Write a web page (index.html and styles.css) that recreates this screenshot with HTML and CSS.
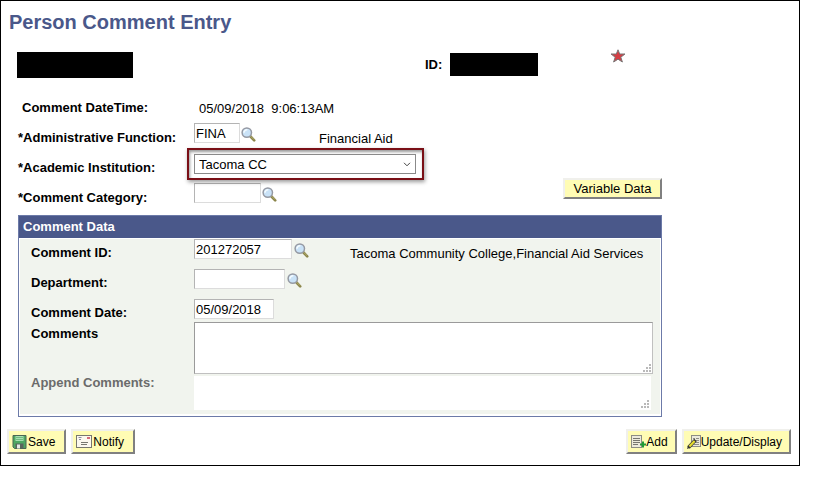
FILE: index.html
```
<!DOCTYPE html>
<html lang="en">
<head>
    <meta charset="UTF-8">
    <title>Person Comment Entry</title>
    <link rel="stylesheet" href="styles.css">
</head>
<body>
    <!-- Shared icons -->
    <svg class="sprite" width="0" height="0">
        <symbol id="icon-lookup" viewBox="0 0 15 15">
            <path d="M9.5 9.5 L13.2 13.4" stroke="#8a8449" stroke-width="2.6" stroke-linecap="round"/>
            <path d="M9.6 9.2 L13 12.6" stroke="#c3bd7c" stroke-width="0.8"/>
            <circle cx="5.8" cy="5.6" r="4.7" fill="#c9e2f7" stroke="#9599a3" stroke-width="1.5"/>
            <path d="M3 5.8 A3 3 0 0 1 6.4 2.8" fill="none" stroke="#f4fbff" stroke-width="1.6"/>
        </symbol>
        <symbol id="icon-grip" viewBox="0 0 8 8">
            <path d="M6 0h2v2h-2z M3 3h2v2h-2z M6 3h2v2h-2z M0 6h2v2h-2z M3 6h2v2h-2z M6 6h2v2h-2z" fill="#b9b9b9"/>
        </symbol>
    </svg>

    <form class="page" onsubmit="return false">
        <h1>Person Comment Entry</h1>

        <div class="person">
            <span class="redacted redacted-name"></span>
            <span class="person-id">ID:</span>
            <span class="redacted redacted-id"></span>
            <svg class="star" width="16" height="14" viewBox="0 0 16 14">
                <path d="M8 0.8 L9.7 5 L15 5 L10.8 8.2 L12.4 13 L8 10.2 L3.6 13 L5.2 8.2 L1 5 L6.3 5 Z" fill="#d43f45" stroke="#777" stroke-width="1"/>
            </svg>
        </div>

        <div class="fields">
            <div class="row">
                <span class="label">Comment DateTime:</span>
                <span class="value datetime">05/09/2018&nbsp; 9:06:13AM</span>
            </div>
            <div class="row">
                <label class="label required" for="function">*Administrative Function:</label>
                <input type="text" id="function" class="w-code" value="FINA">
                <button type="button" class="lookup" aria-label="Look up Administrative Function"><svg width="15" height="15"><use href="#icon-lookup"/></svg></button>
                <span class="value function-name">Financial Aid</span>
            </div>
            <div class="row">
                <label class="label required" for="institution">*Academic Institution:</label>
                <div class="highlight">
                    <select id="institution">
                        <option>Tacoma CC</option>
                    </select>
                    <svg class="chevron" width="8" height="5" viewBox="0 0 8 5"><path d="M1 0.8 L4 3.8 L7 0.8" fill="none" stroke="#444" stroke-width="1"/></svg>
                </div>
            </div>
            <div class="row">
                <label class="label required" for="category">*Comment Category:</label>
                <input type="text" id="category" class="w-category">
                <button type="button" class="lookup" aria-label="Look up Comment Category"><svg width="15" height="15"><use href="#icon-lookup"/></svg></button>
                <button type="button" class="btn btn-variable">Variable Data</button>
            </div>
        </div>

        <section class="panel">
            <h2>Comment Data</h2>
            <div class="panel-body">
                <div class="row">
                    <label class="label" for="comment-id">Comment ID:</label>
                    <input type="text" id="comment-id" class="w-id" value="201272057">
                    <button type="button" class="lookup" aria-label="Look up Comment ID"><svg width="15" height="15"><use href="#icon-lookup"/></svg></button>
                    <span class="value comment-name">Tacoma Community College,Financial Aid Services</span>
                </div>
                <div class="row">
                    <label class="label" for="department">Department:</label>
                    <input type="text" id="department" class="w-department">
                    <button type="button" class="lookup" aria-label="Look up Department"><svg width="15" height="15"><use href="#icon-lookup"/></svg></button>
                </div>
                <div class="row row-date">
                    <label class="label" for="comment-date">Comment Date:</label>
                    <input type="text" id="comment-date" class="w-date" value="05/09/2018">
                </div>
                <div class="row row-text">
                    <label class="label" for="comments">Comments</label>
                    <div class="text-wrap">
                        <textarea id="comments"></textarea>
                        <svg class="grip" width="8" height="8"><use href="#icon-grip"/></svg>
                    </div>
                </div>
                <div class="row row-text append">
                    <label class="label" for="append">Append Comments:</label>
                    <div class="text-wrap">
                        <textarea id="append" readonly></textarea>
                        <svg class="grip" width="8" height="8"><use href="#icon-grip"/></svg>
                    </div>
                </div>
            </div>
        </section>

        <div class="toolbar">
            <button type="submit" class="btn btn-tool">
                <svg width="15" height="14" viewBox="0 0 15 14">
                    <path d="M1 0.5h13v13H2.5L1 12z" fill="#4fa863" stroke="#4b6653"/>
                    <rect x="3.5" y="1" width="8" height="5" fill="#a6dfb0"/>
                    <path d="M4 2.5h7 M4 4.5h7" stroke="#70b980"/>
                    <rect x="3.5" y="8.5" width="8" height="5" fill="#5b665e"/>
                    <rect x="5" y="9.5" width="3" height="4" fill="#e4e9e5"/>
                </svg>Save</button>
            <button type="button" class="btn btn-tool">
                <svg width="16" height="13" viewBox="0 0 16 13">
                    <rect x="0.5" y="0.5" width="15" height="12" fill="#fbf8ee" stroke="#77776f"/>
                    <path d="M2.5 2.5h3 M3 4.5h2" stroke="#8b8ba0"/>
                    <rect x="11" y="2" width="3" height="2" fill="#d66a78"/>
                    <path d="M5 7.5h7 M5 9.5h6" stroke="#77776f"/>
                </svg>Notify</button>
            <button type="button" class="btn btn-tool btn-record btn-add">
                <svg width="15" height="14" viewBox="0 0 15 14">
                    <rect x="0.5" y="0.5" width="10" height="12" fill="#eceadb" stroke="#8d8d84"/>
                    <path d="M2 3.5h7 M2 5.5h7 M2 7.5h7 M2 9.5h5" stroke="#77776f"/>
                    <path d="M9 9.5h6 M12 6.5v6" stroke="#1f9a37" stroke-width="2"/>
                </svg>Add</button>
            <button type="button" class="btn btn-tool btn-record">
                <svg width="14" height="14" viewBox="0 0 14 14">
                    <rect x="4.5" y="0.5" width="9" height="11" fill="#eceadb" stroke="#8d8d84"/>
                    <path d="M6 3.5h2 M9 3.5h3 M8 5.5h4 M8 7.5h4 M7 9.5h5" stroke="#8d8d84"/>
                    <path d="M1.5 12.5 L8.5 5" stroke="#333" stroke-width="3.4"/>
                    <path d="M2.4 11.6 L7.6 6" stroke="#e5dc2f" stroke-width="2.2"/>
                    <path d="M0 14 L1 10.8 L3.2 12.8 Z" fill="#333"/>
                </svg>Update/Display</button>
        </div>
    </form>
</body>
</html>
```
FILE: styles.css
```
* {
    box-sizing: border-box;
}

body {
    margin: 0;
    background: #fff;
    color: #000;
    font-family: "Liberation Sans", Arial, sans-serif;
    font-size: 13px;
    line-height: 16px;
}

.sprite {
    position: absolute;
}

.page {
    margin-right: 29px;
    padding-bottom: 11px;
    border: 1px solid #000;
}

h1 {
    margin: 0;
    padding: 9px 8px 0;
    color: #4a588a;
    font-size: 20px;
    line-height: 24px;
}

input, select, textarea, button {
    margin: 0;
    font-family: inherit;
    font-size: 13px;
    color: #000;
}

/* Person header */
.person {
    display: flex;
    align-items: center;
    padding: 17px 16px 0;
    height: 44px;
}

.redacted {
    background: #000;
}

.redacted-name {
    width: 116px;
    height: 26px;
}

.person-id {
    margin: 0 8px 0 292px;
    font-weight: bold;
}

.redacted-id {
    width: 88px;
    height: 23px;
}

.star {
    align-self: flex-start;
    margin: -2px 0 0 72px;
}

/* Field rows */
.fields {
    margin: 15px 137px 0 17px;
}

.row {
    display: flex;
    align-items: flex-start;
    height: 30px;
}

.label {
    flex: none;
    width: 176px;
    padding: 7px 0 0 4px;
    font-weight: bold;
}

.label.required {
    padding-left: 0;
}

.value {
    padding-top: 8px;
}

.datetime {
    margin-left: 5px;
}

.function-name {
    margin-left: 63px;
}

.comment-name {
    margin-left: 41px;
}

input {
    height: 20px;
    padding: 0 1px;
    background: #fff;
    border: 1px solid #dcdcdc;
    border-top-color: #b4b4b4;
    border-left-color: #b4b4b4;
}

.w-code {
    width: 46px;
}

.w-category {
    width: 67px;
}

.w-id {
    width: 98px;
}

.w-department {
    width: 91px;
}

.w-date {
    width: 80px;
}

.lookup {
    width: 15px;
    height: 15px;
    margin: 4px 0 0 1px;
    padding: 0;
    border: none;
    background: none;
    cursor: pointer;
}

.lookup svg {
    display: block;
}

.highlight {
    position: relative;
    flex: none;
    margin: -5px 0 0 -7px;
    padding: 4px 6px 4px 5px;
    border: 2px solid #7a0f16;
    box-shadow: 1px 2px 4px rgba(0, 0, 0, 0.4), inset 1px 2px 3px rgba(0, 0, 0, 0.4);
}

.highlight select {
    display: block;
    width: 222px;
    height: 20px;
    padding: 0 4px;
    appearance: none;
    background: #fff;
    border: 1px solid #8a8a8a;
    border-radius: 0;
}

.chevron {
    position: absolute;
    top: 12px;
    right: 11px;
    pointer-events: none;
}

/* Yellow push buttons */
.btn {
    padding: 0;
    background: #fffcb4;
    border: 2px solid #808080;
    border-top-color: #f0f0ec;
    border-left-color: #f0f0ec;
    cursor: pointer;
}

.btn-variable {
    width: 99px;
    height: 21px;
    margin: -5px 0 0 auto;
}

/* Comment Data group box */
.panel {
    margin: 2px 137px 0 17px;
    border: 1px solid #6c7aa8;
}

.panel h2 {
    margin: 0;
    padding: 3px 3px 3px 4px;
    background: #4a588a;
    font-size: 13px;
    line-height: 16px;
    color: #fff;
}

.panel-body {
    margin: 1px 1px 2px;
    padding-bottom: 4px;
    background: #f1f4ee;
}

.panel .label {
    width: 174px;
    padding-top: 6px;
    padding-left: 11px;
}

.panel .value {
    padding-top: 7px;
}

.panel .lookup {
    margin-left: 2px;
}

.panel .row-text {
    height: auto;
    padding-right: 7px;
}

.panel .row-date {
    height: 23px;
}

.panel .row-text .label {
    padding-top: 4px;
}

.text-wrap {
    position: relative;
    flex: 1;
}

textarea {
    display: block;
    width: 100%;
    height: 52px;
    resize: none;
    background: #fff;
    border: 1px solid #c0c0c0;
    border-top-color: #9a9a9a;
    border-left-color: #9a9a9a;
}

.panel .append .label {
    padding-top: 1px;
    color: #6b6b6b;
}

.append .text-wrap {
    margin: 2px 2px 0 0;
}

.append textarea {
    height: 34px;
    border-color: #fff;
}

.grip {
    position: absolute;
    right: 2px;
    bottom: 2px;
}

/* Bottom toolbar */
.toolbar {
    display: flex;
    gap: 5px;
    padding: 12px 8px 0 6px;
}

.btn-tool {
    display: flex;
    align-items: center;
    height: 25px;
    padding: 0 9px 0 3px;
    font-size: 12px;
}

.btn-tool svg {
    margin-right: 1px;
}

.btn-record {
    padding-right: 7px;
}

.btn-record svg {
    margin-right: 0;
}

.btn-add {
    margin-left: auto;
}
```
